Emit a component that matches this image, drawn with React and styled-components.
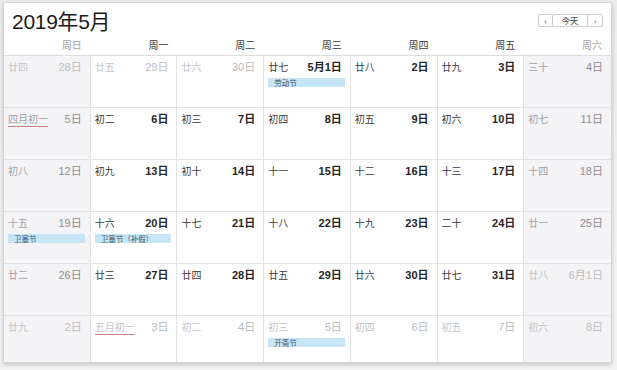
import React from "react";
import styled, { createGlobalStyle } from "styled-components";

const Global = createGlobalStyle`
  html, body { margin: 0; padding: 0; background: #ffffff; }
  body { font-family: "Liberation Sans", "Noto Sans CJK SC", sans-serif; }
  * { box-sizing: border-box; }
`;

const Page = styled.div`
  width: 617px;
  height: 370px;
  padding: 2px 5px 0 3px;
  background: linear-gradient(#ececec, #f4f4f4);
`;

const Window = styled.div`
  width: 609px;
  height: 361px;
  background: #ffffff;
  border: 1px solid #d4d4d4;
  box-shadow: 0 2px 4px rgba(0, 0, 0, 0.18);
  display: flex;
  flex-direction: column;
`;

const TitleBar = styled.div`
  height: 32px;
  display: flex;
  align-items: center;
  justify-content: space-between;
  padding: 2px 8px 0 8px;
`;

const Title = styled.div`
  font-family: "Liberation Sans", "Noto Sans CJK SC", sans-serif;
  font-size: 21px;
  color: #1b1b1b;
  letter-spacing: -0.3px;
`;

const NavGroup = styled.div`
  display: flex;
  height: 13px;
`;

const NavButton = styled.div`
  width: ${(p) => p.$w}px;
  height: 13px;
  border: 1px solid #cdcdcd;
  border-radius: 2px;
  margin-left: -1px;
  display: flex;
  align-items: center;
  justify-content: center;
  font-family: "Noto Sans CJK SC", sans-serif;
  font-size: 8.5px;
  color: #444;
  background: #fff;
`;

const WeekRow = styled.div`
  height: 21px;
  display: grid;
  grid-template-columns: repeat(7, 1fr);
  border-bottom: 1px solid #dedede;
`;

const WeekLabel = styled.div`
  text-align: right;
  padding-right: 9px;
  font-family: "Noto Sans CJK SC", sans-serif;
  font-size: 10px;
  line-height: 19px;
  color: ${(p) => (p.$weekend ? "#a3a3a3" : "#3a3a3a")};
`;

const Grid = styled.div`
  flex: 1;
  display: grid;
  grid-template-columns: repeat(7, 1fr);
  grid-template-rows: repeat(5, 52px) 1fr;
`;

const Cell = styled.div`
  background: ${(p) => (p.$weekend ? "#f4f3f6" : "#ffffff")};
  border-right: ${(p) => (p.$last ? "none" : "1px solid #e3e3e6")};
  border-bottom: ${(p) => (p.$bottom ? "none" : "1px solid #e3e3e6")};
  min-width: 0;
`;

const CellTop = styled.div`
  display: flex;
  justify-content: space-between;
  align-items: center;
  padding: 4px 8px 0 4px;
  height: 18px;
`;

const Lunar = styled.span`
  font-family: "Noto Sans CJK SC", sans-serif;
  font-size: 10px;
  line-height: 12px;
  color: ${(p) => p.$color};
  border-bottom: ${(p) => (p.$mark ? "1px solid #c98282" : "none")};
  padding-bottom: ${(p) => (p.$mark ? "1px" : "0")};
  margin-top: ${(p) => (p.$mark ? "2px" : "0")};
`;

const DateNum = styled.span`
  font-family: "Liberation Sans", "Noto Sans CJK SC", sans-serif;
  font-size: 11px;
  line-height: 14px;
  color: ${(p) => p.$color};
  font-weight: ${(p) => (p.$strong ? 600 : 400)};
`;

const EventBar = styled.div`
  margin: 4px 5px 0 4px;
  height: 9px;
  background: #c6e6f7;
  font-family: "Noto Sans CJK SC", sans-serif;
  font-size: 7.5px;
  line-height: 9px;
  padding-left: 6px;
  color: #3c5670;
  white-space: nowrap;
  overflow: hidden;
`;

const weekdays = ["周日", "周一", "周二", "周三", "周四", "周五", "周六"];

const rows = [
  [
    ["廿四", "28日", 0], ["廿五", "29日", 0], ["廿六", "30日", 0],
    ["廿七", "5月1日", 1, "劳动节"], ["廿八", "2日", 1], ["廿九", "3日", 1], ["三十", "4日", 1],
  ],
  [
    ["四月初一", "5日", 1, null, true], ["初二", "6日", 1], ["初三", "7日", 1], ["初四", "8日", 1],
    ["初五", "9日", 1], ["初六", "10日", 1], ["初七", "11日", 1],
  ],
  [
    ["初八", "12日", 1], ["初九", "13日", 1], ["初十", "14日", 1], ["十一", "15日", 1],
    ["十二", "16日", 1], ["十三", "17日", 1], ["十四", "18日", 1],
  ],
  [
    ["十五", "19日", 1, "卫塞节"], ["十六", "20日", 1, "卫塞节（补假）"], ["十七", "21日", 1],
    ["十八", "22日", 1], ["十九", "23日", 1], ["二十", "24日", 1], ["廿一", "25日", 1],
  ],
  [
    ["廿二", "26日", 1], ["廿三", "27日", 1], ["廿四", "28日", 1], ["廿五", "29日", 1],
    ["廿六", "30日", 1], ["廿七", "31日", 1], ["廿八", "6月1日", 0],
  ],
  [
    ["廿九", "2日", 0], ["五月初一", "3日", 0, null, true], ["初二", "4日", 0], ["初三", "5日", 0, "开斋节"],
    ["初四", "6日", 0], ["初五", "7日", 0], ["初六", "8日", 0],
  ],
];

function colors(inMonth, weekend) {
  if (!inMonth) return { lunar: "#c4c4c8", date: "#bdbdc0" };
  if (weekend) return { lunar: "#a2a0a6", date: "#8e8e92" };
  return { lunar: "#3a3a3a", date: "#262626" };
}

export default function App() {
  return (
    <>
      <Global />
      <Page>
        <Window>
          <TitleBar>
            <Title>2019年5月</Title>
            <NavGroup>
              <NavButton $w={15}>‹</NavButton>
              <NavButton $w={36}>今天</NavButton>
              <NavButton $w={16}>›</NavButton>
            </NavGroup>
          </TitleBar>
          <WeekRow>
            {weekdays.map((w, i) => (
              <WeekLabel key={w} $weekend={i === 0 || i === 6}>
                {w}
              </WeekLabel>
            ))}
          </WeekRow>
          <Grid>
            {rows.map((row, r) =>
              row.map(([lunar, date, inMonth, event, mark], c) => {
                const weekend = c === 0 || c === 6;
                const col = colors(inMonth, weekend);
                return (
                  <Cell
                    key={`${r}-${c}`}
                    $weekend={weekend}
                    $last={c === 6}
                    $bottom={r === rows.length - 1}
                  >
                    <CellTop>
                      <Lunar $color={col.lunar} $mark={mark}>
                        {lunar}
                      </Lunar>
                      <DateNum $color={col.date} $strong={inMonth && !weekend}>
                        {date}
                      </DateNum>
                    </CellTop>
                    {event && <EventBar>{event}</EventBar>}
                  </Cell>
                );
              })
            )}
          </Grid>
        </Window>
      </Page>
    </>
  );
}
